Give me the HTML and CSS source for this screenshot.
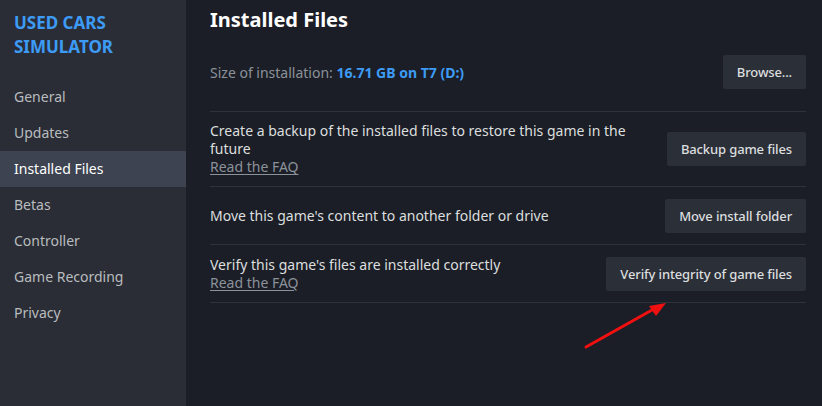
FILE: index.html
```html
<!DOCTYPE html>
<html>
<head>
<meta charset="utf-8">
<link rel="stylesheet" href="styles.css">
</head>
<body>
<div class="app">
  <aside class="sidebar">
    <div class="game-title">USED CARS<br>SIMULATOR</div>
    <nav class="nav">
      <div class="nav-item">General</div>
      <div class="nav-item">Updates</div>
      <div class="nav-item active">Installed Files</div>
      <div class="nav-item">Betas</div>
      <div class="nav-item">Controller</div>
      <div class="nav-item">Game Recording</div>
      <div class="nav-item">Privacy</div>
    </nav>
  </aside>
  <main class="main">
    <h1 class="title">Installed Files</h1>
    <div class="size-row">
      <div class="size-text">Size of installation: <span class="size-value">16.71 GB on T7 (D:)</span></div>
      <button class="btn">Browse...</button>
    </div>
    <div class="row">
      <div class="row-text">
        <div>Create a backup of the installed files to restore this game in the future</div>
        <a class="faq">Read the FAQ</a>
      </div>
      <button class="btn">Backup game files</button>
    </div>
    <div class="row">
      <div class="row-text">
        <div>Move this game's content to another folder or drive</div>
      </div>
      <button class="btn">Move install folder</button>
    </div>
    <div class="row">
      <div class="row-text">
        <div>Verify this game's files are installed correctly</div>
        <a class="faq">Read the FAQ</a>
      </div>
      <button class="btn">Verify integrity of game files</button>
    </div>
  </main>
  <svg class="arrow" width="822" height="406" viewBox="0 0 822 406">
    <line x1="586" y1="347" x2="652" y2="310" stroke="#f01010" stroke-width="3" stroke-linecap="round"/>
    <polygon points="666,303 649,306 656,316" fill="#f01010"/>
  </svg>
</div>
</body>
</html>
```
FILE: styles.css
```css
* { box-sizing: border-box; }
html, body {
  margin: 0;
  padding: 0;
  background: #1b1e26;
}
body {
  font-family: "Noto Sans", "Open Sans", sans-serif;
  width: 822px;
  height: 406px;
  overflow: hidden;
}
.app {
  position: relative;
  display: flex;
  height: 406px;
}
.sidebar {
  width: 186px;
  flex: 0 0 186px;
  background: #2a2d35;
  padding-top: 11px;
}
.game-title {
  color: #3d9bf5;
  font-weight: 700;
  font-size: 17px;
  line-height: 24px;
  padding-left: 14px;
}
.nav {
  margin-top: 20px;
  display: flex;
  flex-direction: column;
}
.nav-item {
  height: 36px;
  line-height: 36px;
  padding-left: 14px;
  font-size: 14px;
  color: #b8bcbf;
}
.nav-item.active {
  background: #3d4350;
  color: #ffffff;
}
.main {
  flex: 1;
  padding: 6px 16px 0 24px;
  color: #dcdedf;
}
.title {
  margin: 0;
  font-size: 20px;
  line-height: 28px;
  font-weight: 700;
  color: #ffffff;
}
.size-row {
  display: flex;
  align-items: center;
  justify-content: space-between;
  padding: 21px 0 22px;
  border-bottom: 1px solid #2e323b;
}
.size-text {
  font-size: 14px;
  color: #8b929a;
}
.size-value {
  color: #3d9bf5;
  font-weight: 700;
}
.row {
  display: flex;
  align-items: center;
  justify-content: space-between;
  padding: 10px 0;
  min-height: 58px;
  border-bottom: 1px solid #2e323b;
}
.row-text {
  font-size: 14px;
  line-height: 18px;
  color: #dcdedf;
  max-width: 430px;
}
.faq {
  display: inline-block;
  color: #8b929a;
  text-decoration: underline;
  text-underline-offset: 2px;
}
.btn {
  font-family: inherit;
  font-size: 13px;
  font-weight: 500;
  letter-spacing: -0.13px;
  color: #dcdedf;
  background: #2b2f38;
  border: none;
  border-radius: 2px;
  height: 34px;
  padding: 0 14px;
  flex: 0 0 auto;
}
.arrow {
  position: absolute;
  left: 0;
  top: 0;
  pointer-events: none;
}
```
